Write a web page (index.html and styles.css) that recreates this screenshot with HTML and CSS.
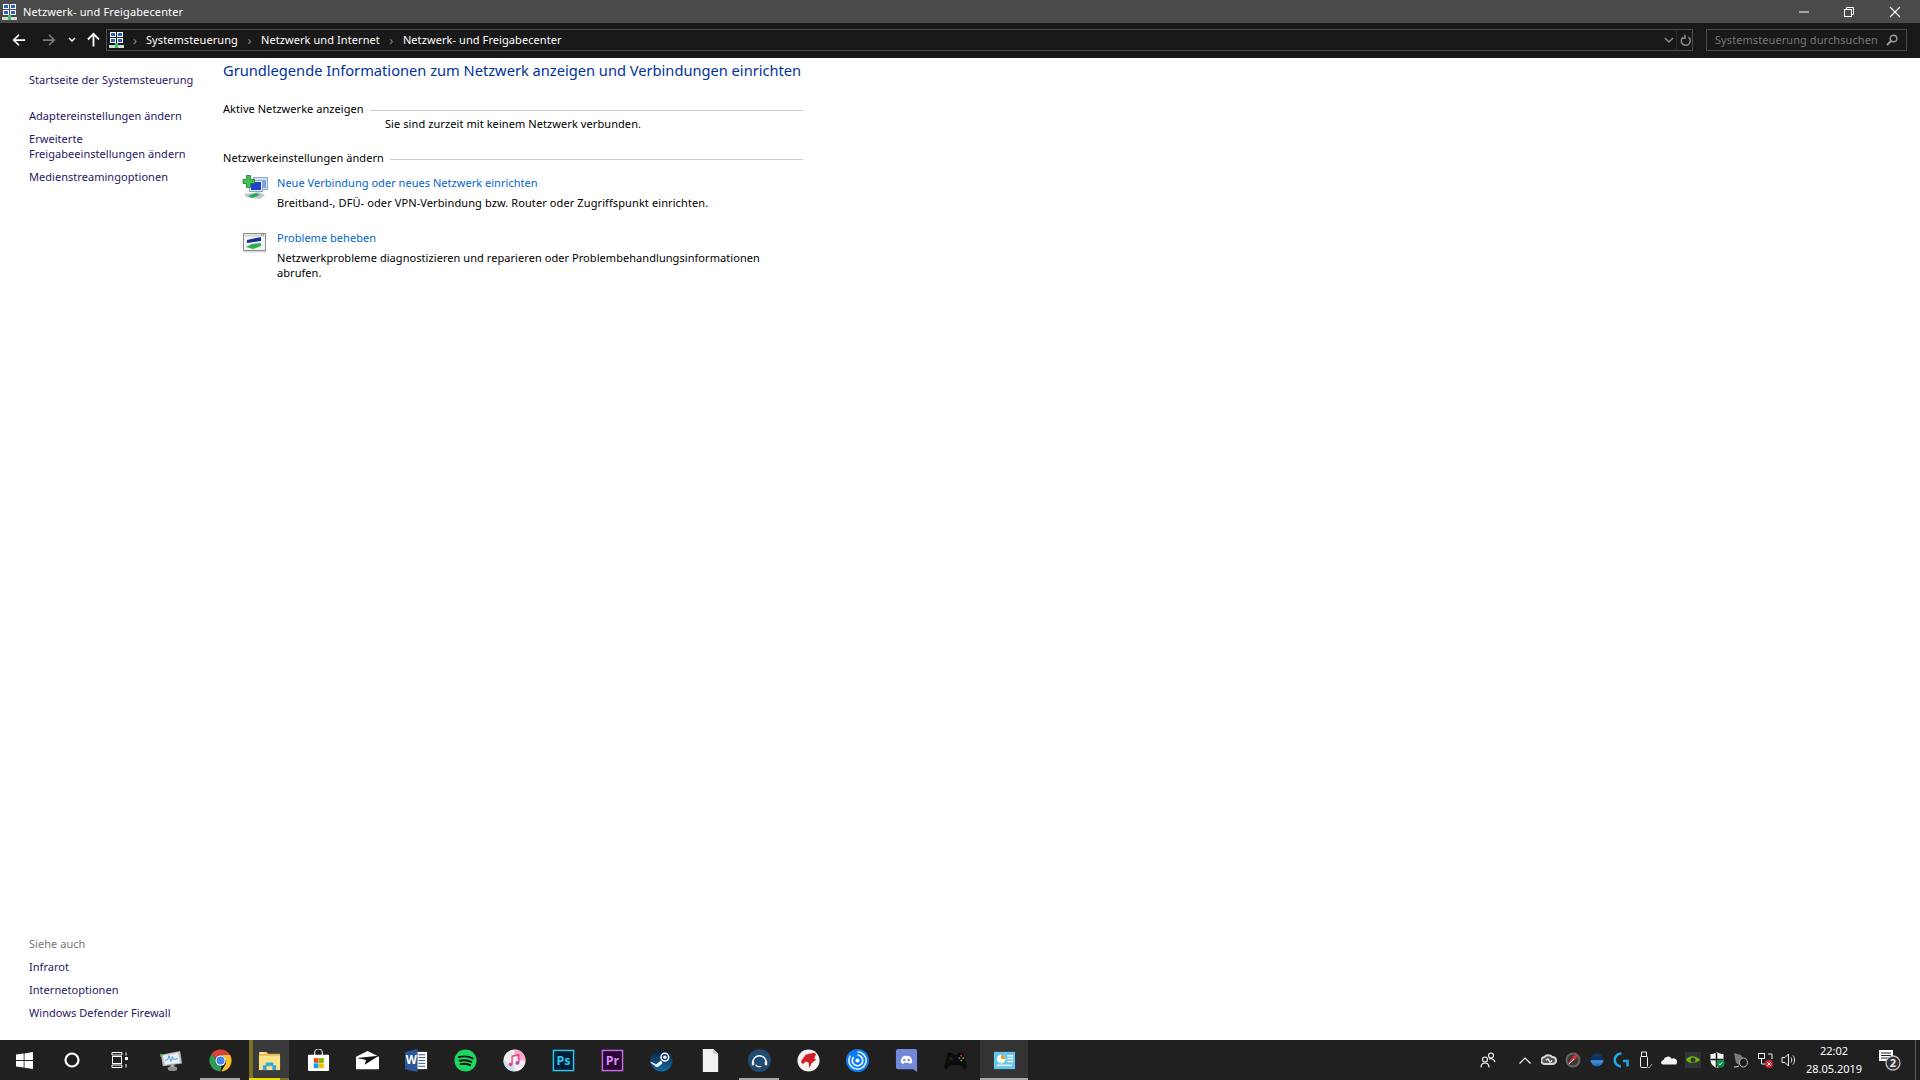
FILE: index.html
```html
<!DOCTYPE html>
<html lang="de">
<head>
<meta charset="utf-8">
<title>Netzwerk- und Freigabecenter</title>
<link rel="stylesheet" href="styles.css">
</head>
<body>
<svg class="defs" width="0" height="0">
  <defs>
    <symbol id="net" viewBox="0 0 15 16" preserveAspectRatio="none">
      <rect x="1" y="0" width="6" height="5" fill="#fff"/><rect x="2" y="1" width="4" height="3" fill="#2a5fc4"/>
      <rect x="8" y="0" width="6" height="5" fill="#fff"/><rect x="9" y="1" width="4" height="3" fill="#2a5fc4"/>
      <rect x="1" y="6" width="6" height="5" fill="#fff"/><rect x="2" y="7" width="4" height="3" fill="#2a5fc4"/>
      <rect x="8" y="6" width="6" height="5" fill="#fff"/><rect x="9" y="7" width="4" height="3" fill="#2a5fc4"/>
      <rect x="0" y="13" width="15" height="3" fill="#d8d8d8"/><rect x="6" y="11" width="3" height="5" fill="#35c46a"/>
    </symbol>
  </defs>
</svg>
<div class="window">
  <header class="titlebar">
    <div class="title-left">
      <svg class="ico-net" viewBox="0 0 15 16"><use href="#net"/></svg>
      <span class="title-text">Netzwerk- und Freigabecenter</span>
    </div>
    <div class="winbtns">
      <div class="winbtn"><svg width="12" height="12" viewBox="0 0 12 12"><path d="M2 6h10" stroke="#fff" stroke-width="1"/></svg></div>
      <div class="winbtn"><svg width="12" height="12" viewBox="0 0 12 12" fill="none" stroke="#fff"><rect x="1.500" y="3.500" width="7" height="7"/><path d="M3.500 3.500V1.500h7v7h-2"/></svg></div>
      <div class="winbtn"><svg width="12" height="12" viewBox="0 0 12 12"><path d="M1 1l10 10M11 1L1 11" stroke="#fff" stroke-width="1.100"/></svg></div>
    </div>
  </header>

  <nav class="navbar">
    <div class="navbtns">
      <svg class="nav-back" width="14" height="14" viewBox="0 0 16 16" fill="none" stroke="#fff" stroke-width="2"><path d="M15 8H2M8 2L2 8l6 6"/></svg>
      <svg class="nav-fwd" width="14" height="14" viewBox="0 0 16 16" fill="none" stroke="#7a7a7a" stroke-width="2"><path d="M1 8h13M8 2l6 6-6 6"/></svg>
      <svg class="nav-down" width="8" height="6" viewBox="0 0 8 6" fill="none" stroke="#fff" stroke-width="1.500"><path d="M1 1l3 3 3-3"/></svg>
      <svg class="nav-up" width="13" height="15" viewBox="0 0 14 15" fill="none" stroke="#fff" stroke-width="2"><path d="M7 15V2M1 7.500l6-6 6 6"/></svg>
    </div>
    <div class="address">
      <svg class="ico-net" viewBox="0 0 15 16"><use href="#net"/></svg>
      <span class="chev first">›</span><span class="crumb">Systemsteuerung</span>
      <span class="chev">›</span><span class="crumb">Netzwerk und Internet</span>
      <span class="chev">›</span><span class="crumb">Netzwerk- und Freigabecenter</span>
      <span class="addr-end">
        <svg width="10" height="7" viewBox="0 0 10 7" fill="none" stroke="#8a8a8a" stroke-width="1.500"><path d="M1 1l4 4 4-4"/></svg>
        <span class="addr-sep"></span>
        <svg width="12" height="13" viewBox="0 0 12 13" fill="none" stroke="#8a8a8a" stroke-width="1.500"><path d="M8.500 3.200A4.500 4.500 0 1 1 3 3.300M5 .8v3.400H1.800"/></svg>
      </span>
    </div>
    <div class="search">
      <span class="search-text">Systemsteuerung durchsuchen</span>
      <svg width="12" height="12" viewBox="0 0 12 12" fill="none" stroke="#9a9a9a"><circle cx="7.500" cy="4.500" r="3.300" stroke-width="1.400"/><path d="M5 7L1 11" stroke-width="2"/></svg>
    </div>
  </nav>

  <div class="content">
    <aside class="sidebar">
      <div class="side-top">
        <a class="side-link home">Startseite der Systemsteuerung</a>
        <a class="side-link">Adaptereinstellungen ändern</a>
        <a class="side-link">Erweiterte<br>Freigabeeinstellungen ändern</a>
        <a class="side-link">Medienstreamingoptionen</a>
      </div>
      <div class="side-bottom">
        <div class="side-head">Siehe auch</div>
        <a class="side-link">Infrarot</a>
        <a class="side-link">Internetoptionen</a>
        <a class="side-link">Windows Defender Firewall</a>
      </div>
    </aside>
    <main class="main">
      <h1 class="page-title">Grundlegende Informationen zum Netzwerk anzeigen und Verbindungen einrichten</h1>
      <div class="section-head first"><span>Aktive Netzwerke anzeigen</span><i class="rule"></i></div>
      <p class="no-net">Sie sind zurzeit mit keinem Netzwerk verbunden.</p>
      <div class="section-head second"><span>Netzwerkeinstellungen ändern</span><i class="rule"></i></div>
      <div class="task">
        <svg class="task-ico" width="27" height="26" viewBox="-1 0 27 26">
          <rect x="10.500" y="2.500" width="14" height="12" fill="#d3def2" stroke="#8fa6cc"/><rect x="13" y="5" width="10" height="8" fill="#7f9fe4"/>
          <rect x="6.500" y="5.500" width="13" height="11" fill="#e4ebf7" stroke="#8fa6cc"/><rect x="8" y="7" width="10" height="8" fill="#1e44c8"/>
          <path d="M1 19l15-2 6 3-5 4-14-2z" fill="#c4c8cc"/><path d="M5 21l8-3 4 2-8 3z" fill="#27a84a"/>
          <path d="M3.500 .5h4v4h4v4h-4v4h-4v-4h-3.500v-4h3.500z" fill="#3fc24f" stroke="#1f7a2c" stroke-width=".8"/>
        </svg>
        <div class="task-body">
          <a class="task-link">Neue Verbindung oder neues Netzwerk einrichten</a>
          <p class="task-desc">Breitband-, DFÜ- oder VPN-Verbindung bzw. Router oder Zugriffspunkt einrichten.</p>
        </div>
      </div>
      <div class="task">
        <svg class="task-ico second-ico" width="27" height="22" viewBox="0 0 27 22">
          <rect x="1.500" y=".5" width="22" height="17" fill="#f2f2f2" stroke="#8d8d8d"/>
          <rect x="2.500" y="1.500" width="20" height="2" fill="#cfd3d8"/>
          <path d="M19 1.500h1v1h-1zM21 1.500h1v1h-1z" fill="#555"/>
          <path d="M5 7l14-3v4L5 10z" fill="#1a2f9c"/>
          <path d="M4 14l6-3 9-1v3l-8 3z" fill="#2bb04c"/>
          <rect x="2" y="18" width="22" height="1.500" fill="#d8d8d8"/>
        </svg>
        <div class="task-body">
          <a class="task-link">Probleme beheben</a>
          <p class="task-desc wrap">Netzwerkprobleme diagnostizieren und reparieren oder Problembehandlungsinformationen abrufen.</p>
        </div>
      </div>
    </main>
  </div>

  <footer class="taskbar">
    <div class="tb-sys">
      <div class="tb-sysbtn"><svg width="17" height="17" viewBox="0 0 17 17" fill="#fff"><path d="M0 2.600L7.700 1.500v6.600H0zM8.500 1.400L17 0v8.100H8.500zM0 8.900h7.700v6.600L0 14.400zM8.500 8.900H17V17L8.500 15.700z"/></svg></div>
      <div class="tb-sysbtn"><svg width="16" height="16" viewBox="0 0 16 16" fill="none" stroke="#fff" stroke-width="2.200"><circle cx="8" cy="8" r="6.500"/></svg></div>
      <div class="tb-sysbtn"><svg width="18" height="16" viewBox="0 0 18 16" fill="none" stroke="#fff" stroke-width="1"><path d="M1 .5h10M1 15.500h10M1 3h10M1 13h10"/><rect x="1.500" y="4.500" width="9" height="7"/><rect x="14" y="5" width="3" height="3" fill="#fff" stroke="none"/><path d="M15 .5v3M15 12v3.500M1 .5v2.500M11 .5v2.500M1 13v2.500M11 13v2.500"/></svg></div>
    </div>
    <div class="tb-apps">
      <div class="tb-app"><svg class="tb-ico" viewBox="0 0 24 24"><path d="M1 6l20-4 2 13-20 3z" fill="#b9bec4"/><path d="M3 7l16-3 2 10-16 2.500z" fill="#e9eef3"/><path d="M5 12l3-1 1.500-4 2 6 1.500-5 1.500 3 4-1" fill="none" stroke="#3f9bd6" stroke-width="1"/><ellipse cx="13" cy="20.500" rx="5" ry="2.500" fill="#8f8f8f"/><path d="M11 16h4v3h-4z" fill="#a8a8a8"/><rect x="0" y="5" width="2" height="3" fill="#4cae50"/></svg></div>
      <div class="tb-app under"><svg class="tb-ico" viewBox="0 0 24 24"><path d="M12 0.500a11.500 11.500 0 0 1 10 5.750H12a5.750 5.750 0 0 0-5 2.900L2.300 5.800A11.500 11.500 0 0 1 12 0.500z" fill="#db4437"/><path d="M22 6.250A11.500 11.500 0 0 1 12.900 23.500L17 16.500a5.750 5.750 0 0 0 0-5.500 5.800 5.800 0 0 0-5-4.750z" fill="#fbc02d"/><path d="M2.300 5.800L7 9.150A5.750 5.750 0 0 0 12.900 17.700l-.9 5.800A11.500 11.500 0 0 1 2.300 5.800z" fill="#2e9e4f"/><circle cx="12" cy="12" r="5.400" fill="#fff"/><circle cx="12" cy="12" r="4.200" fill="#4285f4"/></svg></div>
      <div class="tb-app explorer"><svg class="tb-ico" viewBox="0 0 24 24"><path d="M1 3h8l2 2h12v17H1z" fill="#e4b94f"/><rect x="1" y="7" width="22" height="15" fill="#fbe38a"/><rect x="2" y="3.500" width="6" height="1.500" fill="#fff3c4"/><path d="M5 22v-5h3v-3h8v3h3v5h-4v-4H9v4z" fill="#35a6de"/></svg></div>
      <div class="tb-app"><svg class="tb-ico" viewBox="0 0 24 24"><path d="M8 7V4a4 4 0 0 1 8 0v3" fill="none" stroke="#ddd" stroke-width="1.300"/><rect x="1" y="6" width="22" height="17" rx="1" fill="#fff"/><rect x="7" y="9.500" width="5" height="5" fill="#f25022"/><rect x="12.500" y="9.500" width="5" height="5" fill="#7fba00"/><rect x="7" y="15" width="5" height="5" fill="#00a4ef"/><rect x="12.500" y="15" width="5" height="5" fill="#ffb900"/></svg></div>
      <div class="tb-app"><svg class="tb-ico" viewBox="0 0 24 24"><path d="M0 8L12 2l12 6v13H0z" fill="#fff"/><path d="M1 9.500l23-2.500-15 9.500 1.500-5z" fill="#111"/></svg></div>
      <div class="tb-app"><svg class="tb-ico" viewBox="0 0 24 24"><path d="M0 3l13-3v24L0 21z" fill="#2b579a"/><rect x="13" y="3" width="10" height="18" fill="#fff"/><path d="M14 6h7M14 9h7M14 12h7M14 15h7M14 18h7" stroke="#2b579a" stroke-width="1"/><text class="svg-w" x="6.500" y="16" text-anchor="middle">W</text></svg></div>
      <div class="tb-app"><svg class="tb-ico" viewBox="0 0 24 24"><circle cx="12" cy="12" r="11.500" fill="#1ed760"/><path d="M5 8.500c5-1.400 10-1 14.500 1.300M6 12.300c4-1 8.500-.7 12 1.200M6.800 15.800c3.500-.8 7-.5 10 1" fill="none" stroke="#111" stroke-width="2" stroke-linecap="round"/></svg></div>
      <div class="tb-app"><svg class="tb-ico" viewBox="0 0 24 24"><circle cx="12" cy="12" r="11.500" fill="#f4eef2"/><path d="M12 .5A11.500 11.500 0 0 1 23.500 12H17L12 6z" fill="#f4a9c8"/><path d="M.5 12A11.500 11.500 0 0 0 12 23.500V18z" fill="#b7d8ee" opacity=".7"/><path d="M9.500 16V7.500l7-1.500v8.500" fill="none" stroke="#e64b8d" stroke-width="1.500"/><circle cx="8" cy="16" r="2" fill="#e64b8d"/><circle cx="15" cy="14.500" r="2" fill="#a54cc9"/></svg></div>
      <div class="tb-app"><svg class="tb-ico" viewBox="0 0 24 24"><rect x="1.500" y="1.500" width="21" height="21" fill="#001e36" stroke="#31c5f0" stroke-width="1.500"/><text class="svg-ps" x="12" y="17" text-anchor="middle">Ps</text></svg></div>
      <div class="tb-app"><svg class="tb-ico" viewBox="0 0 24 24"><rect x="1.500" y="1.500" width="21" height="21" fill="#2a0634" stroke="#c96be8" stroke-width="1.500"/><text class="svg-pr" x="12" y="17" text-anchor="middle">Pr</text></svg></div>
      <div class="tb-app"><svg class="tb-ico" viewBox="0 0 24 24"><defs><linearGradient id="stm" x1="0" y1="0" x2="0" y2="1"><stop offset="0" stop-color="#0d1d3a"/><stop offset="1" stop-color="#0f6ea8"/></linearGradient></defs><circle cx="12" cy="12" r="11.500" fill="url(#stm)"/><circle cx="15.500" cy="8.500" r="4" fill="none" stroke="#fff" stroke-width="1.600"/><circle cx="15.500" cy="8.500" r="1.800" fill="#fff"/><path d="M0 13l6.500 3 5-4 1.500 3-4.500 3.500a3 3 0 0 1-4-1.500L1 14.500z" fill="#fff"/></svg></div>
      <div class="tb-app"><svg class="tb-ico" viewBox="0 0 24 24"><path d="M4 0h11l5 5v19H4z" fill="#f2f2f2"/><path d="M15 0v5h5z" fill="#c8c8c8"/></svg></div>
      <div class="tb-app under"><svg class="tb-ico" viewBox="0 0 24 24"><circle cx="12" cy="12" r="12" fill="#22496f"/><path d="M5 14a7 7 0 0 1 14 0" fill="none" stroke="#fff" stroke-width="1.500"/><path d="M4 13h2.500v4H4zM17.500 13H20v4h-2.500z" fill="#fff"/><path d="M8 16.500c1 2 3 2.500 6 1.500" fill="none" stroke="#fff" stroke-width="1.300"/></svg></div>
      <div class="tb-app"><svg class="tb-ico" viewBox="0 0 24 24"><circle cx="12" cy="12" r="11.500" fill="#f7f1f1"/><path d="M4 13l5-7 8-2 3 1-2 5 2 1-5 4-2 5-1-6-3-1-3 3z" fill="#cf2027"/></svg></div>
      <div class="tb-app"><svg class="tb-ico" viewBox="0 0 24 24"><circle cx="12" cy="12" r="12" fill="#0a7bf0"/><path d="M12 3a9 9 0 1 1-9 9c0-2 .7-3.500 1.500-5" fill="none" stroke="#cfe7ff" stroke-width="1.800"/><path d="M12 6.500a5.500 5.500 0 1 1-5.500 5.500c0-1.500.7-2.500 1.500-3.500" fill="none" stroke="#eaf5ff" stroke-width="1.800"/><circle cx="12" cy="12" r="2.200" fill="#fff"/></svg></div>
      <div class="tb-app"><svg class="tb-ico" viewBox="0 0 24 24"><path d="M3 0h18a2 2 0 0 1 2 2v22l-4-3H3a2 2 0 0 1-2-2V2a2 2 0 0 1 2-2z" fill="#7289da"/><path d="M6 14c0-3 1-5 2-6 2-1 3-1 4-.5 1-.5 2-.5 4 .5 1 1 2 3 2 6-1 1-2 1.500-3 1.500l-1-1.500c-1 .5-3 .5-4 0L9 15.500C8 15.500 7 15 6 14z" fill="#fff"/><circle cx="9.700" cy="11.500" r="1.300" fill="#7289da"/><circle cx="14.300" cy="11.500" r="1.300" fill="#7289da"/></svg></div>
      <div class="tb-app"><svg class="tb-ico" viewBox="0 0 24 24"><path d="M4 4h5l1 2h4l1-2h5l4 15-2 3-5-5H7l-5 5-2-3z" fill="#0c0c0c"/><circle cx="7" cy="10" r="2" fill="#222"/><circle cx="18" cy="7" r="1" fill="#e23b3b"/><circle cx="20" cy="9.500" r="1" fill="#e0a020"/><circle cx="16" cy="9.500" r="1" fill="#3b8fe2"/><circle cx="18" cy="12" r="1" fill="#3bb54a"/></svg></div>
      <div class="tb-app active"><svg class="tb-ico" viewBox="0 0 24 24"><rect x="1" y="3" width="22" height="18" fill="#63c6ee"/><circle cx="8.500" cy="10.500" r="4.500" fill="#fff"/><path d="M8.500 10.500V6a4.500 4.500 0 0 1 4.500 4.500z" fill="#f39c12"/><path d="M4 17h16" stroke="#eaf6fc" stroke-width="1.500"/><path d="M15 7h6M15 10h6M15 13h6" stroke="#fff" stroke-width="1.500"/></svg></div>
    </div>
    <div class="tray">
      <div class="tray-people"><svg width="16" height="16" viewBox="0 0 16 16" fill="none" stroke="#fff" stroke-width="1.100"><circle cx="5" cy="7.500" r="2.500"/><path d="M1 15.500c0-2.500 1.500-4.500 4-4.500s4 2 4 4.500"/><circle cx="11" cy="3.500" r="2.500"/><path d="M9 7c2-.8 5-.3 6 3"/></svg></div>
      <div class="tray-chev"><svg width="12" height="7" viewBox="0 0 12 7" fill="none" stroke="#fff" stroke-width="1.200"><path d="M.5 6.500L6 1l5.500 5.500"/></svg></div>
      <div class="tray-icons">
        <svg width="16" height="16" viewBox="0 0 16 16" fill="none" stroke="#d8d8d8" stroke-width="2"><path d="M4 12a3.500 3.500 0 0 1-.5-7c1.500-2.500 6-2.500 7.500 0a3.500 3.500 0 0 1 1 7z" fill="#555"/><path d="M5 8.500c1.500-2 2.500-2 3 0s1.500 2 3 0" stroke="#f0f0f0" stroke-width="1.300"/></svg>
        <svg width="16" height="16" viewBox="0 0 16 16"><circle cx="8" cy="8" r="7.500" fill="#666"/><circle cx="8" cy="8" r="5.500" fill="#3a3a3a"/><path d="M3 12l5-8 5-2-2 5-5 3z" fill="#d62f2f"/><path d="M4 12l5-5" stroke="#eee"/></svg>
        <svg width="16" height="16" viewBox="0 0 16 16"><defs><linearGradient id="sph" x1="0" y1="0" x2="0" y2="1"><stop offset="0" stop-color="#0d3c6e"/><stop offset=".5" stop-color="#0a2f5c"/><stop offset=".55" stop-color="#4c9ade"/><stop offset="1" stop-color="#1a5ea5"/></linearGradient></defs><circle cx="8" cy="8" r="6.500" fill="url(#sph)"/></svg>
        <svg width="16" height="16" viewBox="0 0 16 16" fill="none" stroke="#1fa9e6" stroke-width="2.500"><path d="M8.500 1.500A6.500 6.500 0 1 0 8 14.500M10 9h4.500v5.500"/></svg>
        <svg width="16" height="18" viewBox="0 0 16 18" fill="none" stroke="#f0f0f0" stroke-width="1"><rect x="3.500" y="5.500" width="7" height="11" rx="1"/><path d="M4.500 5.500V1h5v4.500"/><path d="M10 15l2 2 3-4" stroke="#999"/></svg>
        <svg width="16" height="16" viewBox="0 0 16 16" fill="#f4f4f4"><path d="M0 11a3 3 0 0 1 2.500-3 4.500 4.500 0 0 1 8.200-1.200A3.500 3.500 0 0 1 16 10.500a2.500 2.500 0 0 1-1 2H2a3 3 0 0 1-2-1.500z"/></svg>
        <svg width="16" height="16" viewBox="0 0 16 16"><rect width="16" height="16" fill="#30353a"/><path d="M1 8c3-5 9-5 14 0-5 4-11 4-14 0z" fill="#76b900"/><circle cx="8" cy="8" r="2.500" fill="#30353a"/></svg>
        <svg width="16" height="16" viewBox="0 0 16 16"><path d="M8 0c2 1.500 4 2 6.500 2v6c0 4-3 6.500-6.500 8-3.500-1.500-6.500-4-6.500-8V2C4 2 6 1.500 8 0z" fill="#f4f4f4"/><path d="M7.500 .5v15M1.500 7.500h13" stroke="#111" stroke-width="1.500"/><circle cx="11.500" cy="11.500" r="4" fill="#0f8a4c"/><path d="M9.700 11.500l1.300 1.300 2.300-2.500" stroke="#fff" fill="none"/></svg>
        <svg width="16" height="16" viewBox="0 0 16 16"><path d="M1 1l7 2 6 9-3 3-8-4z" fill="#7a7a7a"/><ellipse cx="10.500" cy="10.500" rx="4" ry="4.500" fill="#1a1a1a" stroke="#bbb"/><path d="M1 15c2 0 4-.5 5-1" stroke="#eee"/></svg>
        <svg width="16" height="16" viewBox="0 0 16 16" fill="none" stroke="#f0f0f0"><rect x="1.500" y="1.500" width="6" height="5"/><path d="M4.500 6.500V12H10M11 2h4v5"/><circle cx="12" cy="12" r="4" fill="#d92638" stroke="none"/><path d="M10.300 10.300l3.400 3.400M13.700 10.300l-3.400 3.400" stroke="#fff"/></svg>
        <svg width="16" height="16" viewBox="0 0 16 16" fill="none" stroke="#f0f0f0"><path d="M1 5.500h3L7.500 2v12L4 10.500H1z"/><path d="M10 5.500c1 1.500 1 3.500 0 5M12 3.500c2 2.500 2 6.500 0 9"/></svg>
      </div>
      <div class="clock"><div>22:02</div><div>28.05.2019</div></div>
      <div class="notif"><svg width="24" height="22" viewBox="0 0 24 22"><path d="M1 1h14v11H1z" fill="#fff"/><path d="M3 4h10M3 6.500h10M3 9h7" stroke="#222"/><circle cx="15" cy="14" r="7" fill="#333" stroke="#bdbdbd" stroke-width="1.300"/><text class="svg-badge" x="15" y="18" text-anchor="middle">2</text></svg></div>
      <div class="desktop-peek"></div>
    </div>
  </footer>
</div>
</body>
</html>
```

FILE: styles.css
```css
* { box-sizing: border-box; }
html, body { margin: 0; height: 100%; overflow: hidden; }
body { font: 11px/15px "Noto Sans", sans-serif; color: #000; background: #fff; }
.defs { position: absolute; }
p, h1 { margin: 0; font-weight: 400; }
.window { display: flex; flex-direction: column; height: 1080px; }

.titlebar { height: 23px; flex: none; display: flex; justify-content: space-between; align-items: center; background: #4a4a4a; color: #fff; padding-right: 2px; }
.title-left { display: flex; align-items: center; padding-left: 2px; }
.ico-net { width: 15px; height: 16px; display: block; flex: none; }
.title-text { margin-left: 6px; letter-spacing: .13px; }
.winbtns { display: flex; }
.winbtn { width: 46px; height: 20px; display: flex; align-items: center; justify-content: center; }

.navbar { height: 35px; flex: none; display: flex; align-items: flex-start; background: #191919; padding: 6px 13px 0 0; }
.navbtns { width: 106px; height: 21px; flex: none; display: flex; align-items: center; padding-left: 12px; }
.nav-fwd { margin-left: 16px; }
.nav-down { margin-left: 12px; }
.nav-up { margin-left: 11px; }
.address { flex: 1; height: 22px; border: 1px solid #4b4b4b; display: flex; align-items: center; color: #fff; padding-left: 2px; letter-spacing: .08px; }
.crumb { padding-bottom: 2px; }
.chev { color: #888; width: 23px; text-align: center; font-size: 13px; flex: none; }
.chev.first { width: 22px; }
.addr-end { margin-left: auto; display: flex; align-items: center; height: 100%; }
.addr-sep { width: 1px; height: 100%; background: #2b2b2b; margin: 0 3px 0 2px; }
.search { width: 201px; height: 22px; margin-left: 13px; border: 1px solid #4b4b4b; display: flex; align-items: center; justify-content: space-between; padding: 0 8px; color: #777; flex: none; }
.search-text { padding-bottom: 2px; letter-spacing: .08px; }

.content { flex: 1; display: flex; min-height: 0; }
.sidebar { width: 223px; flex: none; display: flex; flex-direction: column; justify-content: space-between; padding: 14px 0 20px 29px; color: #1f1765; letter-spacing: .04px; }
.side-link { display: block; }
.side-top .side-link + .side-link { margin-top: 8px; }
.side-top .home + .side-link { margin-top: 21px; }
.side-bottom { display: flex; flex-direction: column; gap: 8px; }
.side-head { color: #767676; }

.main { width: 580px; flex: none; padding-top: 2px; }
.page-title { font-size: 14.650px; line-height: 21px; color: #003399; white-space: nowrap; }
.section-head { display: flex; align-items: center; gap: 6px; letter-spacing: .05px; }
.section-head.first { margin-top: 20px; }
.section-head.second { margin-top: 19px; }
.rule { flex: 1; height: 1px; background: #cfcfcf; margin-top: 3px; }
.no-net { padding-left: 162px; letter-spacing: .08px; }
.task { display: flex; margin-top: 10px; padding-left: 19px; }
.task + .task { margin-top: 20px; }
.task-ico { flex: none; margin-right: 8px; }
.second-ico { margin-top: 3px; }
.task-link { color: #0066cc; display: block; letter-spacing: .03px; }
.task-desc { margin-top: 5px; max-width: 510px; letter-spacing: .1px; }
.task-desc.wrap { letter-spacing: .06px; }

.taskbar { height: 40px; flex: none; background: #202020; display: flex; align-items: stretch; color: #fff; }
.tb-sys { display: flex; width: 151px; flex: none; }
.tb-sysbtn { width: 48px; display: flex; align-items: center; justify-content: center; }
.tb-apps { display: flex; gap: 9px; }
.tb-app { width: 40px; display: flex; align-items: center; justify-content: center; position: relative; }
.tb-ico { width: 23px; height: 23px; display: block; }
.tb-app.under::after { content: ""; position: absolute; left: 0; right: 0; bottom: 0; height: 2px; background: #a8a8a8; }
.tb-app.explorer { background: #3a3a3a; box-shadow: inset 4px 0 0 #7b7322; }
.tb-app.explorer::after { content: ""; position: absolute; left: 0; right: 0; bottom: 0; height: 2px; background: linear-gradient(90deg, #e8e000 78%, #7b7322 78%); }
.tb-app.active { width: 48px; margin: 0 -4px; background: #333; }
.tb-app.active::after { content: ""; position: absolute; left: 0; right: 0; bottom: 0; height: 2px; background: #a8a8a8; }
.svg-w { font: 700 12px "Noto Sans", sans-serif; fill: #fff; }
.svg-ps { font: 700 13px "Noto Sans", sans-serif; fill: #31c5f0; }
.svg-pr { font: 700 13px "Noto Sans", sans-serif; fill: #d98cf0; }
.svg-badge { font: 700 11px "Noto Sans", sans-serif; fill: #e8e8e8; }

.tray { margin-left: auto; display: flex; align-items: center; height: 100%; }
.tray-people { width: 37px; display: flex; justify-content: center; padding-right: 13px; }
.tray-chev { width: 24px; display: flex; justify-content: center; }
.tray-icons { display: flex; gap: 8px; padding-left: 4px; align-items: center; }
.clock { width: 78px; margin-left: -2px; text-align: center; line-height: 18px; }
.notif { width: 42px; display: flex; justify-content: center; padding-right: 8px; }
.desktop-peek { width: 5px; height: 100%; border-left: 1px solid #5a5a5a; }
```
